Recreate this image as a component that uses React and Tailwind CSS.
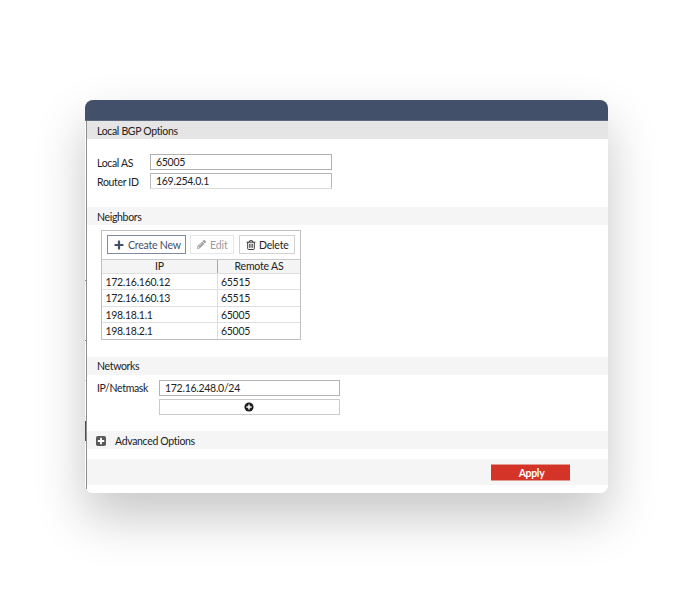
import { FaPencilAlt } from "react-icons/fa";

const neighbors = [
  ["172.16.160.12", "65515"],
  ["172.16.160.13", "65515"],
  ["198.18.1.1", "65005"],
  ["198.18.2.1", "65005"],
];

function PlusIcon() {
  return (
    <svg viewBox="0 0 10 10" className="mr-[4px] size-[10px] shrink-0" fill="currentColor">
      <path d="M3.9 1q0-.5.5-.5h1.2q.5 0 .5.5v2.9H9q.5 0 .5.5v1.2q0 .5-.5.5H6.1V9q0 .5-.5.5H4.4q-.5 0-.5-.5V6.1H1q-.5 0-.5-.5V4.4q0-.5.5-.5h2.9z" />
    </svg>
  );
}

function TrashIcon() {
  return (
    <svg viewBox="0 0 10 10" className="mr-[4px] size-[10px] shrink-0" fill="none" stroke="currentColor" strokeWidth="0.9">
      <path d="M.6 2.2h8.8M3.2 2.2l.5-1.5h2.6l.5 1.5M1.7 2.4v6.2q0 .9.8.9h5q.8 0 .8-.9V2.4" />
      <path d="M3.6 3.8v4M5 3.8v4M6.4 3.8v4" strokeWidth="0.75" />
    </svg>
  );
}

function PlusCircleIcon() {
  return (
    <svg viewBox="0 0 10 10" className="mr-px size-[10px] shrink-0">
      <circle cx="5" cy="5" r="4.6" fill="#1f1f1f" />
      <path d="M5 2.4v5.2M2.4 5h5.2" stroke="#fff" strokeWidth="1.5" />
    </svg>
  );
}

function PlusSquareIcon() {
  return (
    <svg viewBox="0 0 10 10" className="-mt-px -ml-px mr-[9px] size-[10px] shrink-0">
      <rect width="10" height="10" rx="1.8" fill="#5a5a5a" />
      <path d="M5 1.8v6.4M1.8 5h6.4" stroke="#fff" strokeWidth="1.8" />
    </svg>
  );
}

function Section({ children, className = "bg-[#f5f5f5] pt-[2px]" }) {
  return <div className={`flex h-[18px] items-center pl-[10px] ${className}`}>{children}</div>;
}

function Field({ children, className }) {
  return (
    <div className={`flex h-[16px] items-center border pl-[5px] tracking-[-0.28px] ${className}`}>{children}</div>
  );
}

export default function App() {
  return (
    <div className="h-[593px] w-[693px] overflow-hidden bg-white pt-[100px] pl-[85px] font-['Lato',sans-serif] text-[10.5px] leading-[14px] tracking-[-0.33px] text-[#222]">
      <div className="h-[393px] w-[523px] rounded-[8px] shadow-[0_24px_50px_rgba(0,0,0,0.225)]">
        <div className="flex h-[393px] flex-col overflow-hidden rounded-[8px] bg-white">
          <div className="h-[21px] shrink-0 border-b border-[#5d6a80] bg-[#425069]" />
          <div className="flex h-[372px]">
            <div className="flex w-px flex-col">
              <div className="mt-[159px] h-px bg-[#999]" />
              <div className="mt-[59px] h-px bg-[#888]" />
              <div className="mt-[39px] h-px bg-[#ccc]" />
              <div className="mt-[40px] h-[20px] bg-[#425069]" />
            </div>
            <div className="mb-[4px] w-px bg-[#8d8d8d]" />
            <div className="flex flex-1 flex-col">
              <Section className="bg-[#e5e5e5] pt-[2px]">Local BGP Options</Section>

              <div className="mt-[15px] flex h-[16px] items-center pl-[10px]">
                <span className="w-[53px] pt-px">Local AS</span>
                <Field className="w-[182px] border-[#b0b0b0]">65005</Field>
              </div>
              <div className="mt-[3px] flex h-[16px] items-center pl-[10px]">
                <span className="w-[53px] pt-px">Router ID</span>
                <Field className="w-[182px] border-[#b8b8b8] border-b-[#dcdcdc]">169.254.0.1</Field>
              </div>

              <div className="h-[18px]" />
              <Section>Neighbors</Section>
              <div className="mt-[5px] ml-[14px] h-[110px] w-[200px] border border-[#c0c0c0]">
                <div className="flex h-[28px] pt-[4px] pl-[5px]">
                  <div className="flex h-[19px] w-[79px] items-center border border-[#7f8ba0] pl-[6px] tracking-[-0.2px] text-[#425069]">
                    <PlusIcon />
                    <span>Create New</span>
                  </div>
                  <div className="ml-[4px] flex h-[19px] w-[44px] items-center border border-[#e6e6e6] pl-[6px] tracking-[-0.1px] text-[#9c9c9c]">
                    <FaPencilAlt className="mr-[4px] size-[9px] shrink-0" />
                    <span>Edit</span>
                  </div>
                  <div className="ml-[5px] flex h-[19px] w-[56px] items-center border border-[#d2d2d2] pl-[6px] tracking-[-0.2px]">
                    <TrashIcon />
                    <span className="-ml-px">Delete</span>
                  </div>
                </div>
                <div className="flex h-[15px] border-y border-t-[#c8c8c8] border-b-[#dedede] bg-[#f4f4f4] text-center leading-[13px] tracking-[-0.2px]">
                  <div className="w-[116px] border-r border-[#a8a8a8]">IP</div>
                  <div className="flex-1">Remote AS</div>
                </div>
                {neighbors.map(([ip, as], i) => (
                  <div
                    key={ip}
                    className={`flex items-center tracking-[-0.28px] ${i === 3 ? "" : "border-b border-[#e0e0e0]"} ${i === 1 ? "h-[17px]" : "h-[16px]"}`}
                  >
                    <div className="flex h-full w-[116px] items-center border-r border-[#dedede] pl-[3.4px]">{ip}</div>
                    <div className="pl-[3px]">{as}</div>
                  </div>
                ))}
              </div>

              <div className="h-[17px]" />
              <Section className="bg-[#f5f5f5]">Networks</Section>
              <div className="mt-[5px] flex h-[16px] items-center pl-[10px]">
                <span className="w-[62px]">IP/Netmask</span>
                <Field className="w-[181px] border-[#b4b4b4]">172.16.248.0/24</Field>
              </div>
              <div className="mt-[3px] ml-[72px] flex h-[16px] w-[181px] items-center justify-center border border-[#cacaca]">
                <PlusCircleIcon />
              </div>

              <div className="h-[16px]" />
              <Section>
                <PlusSquareIcon />
                <span>Advanced Options</span>
              </Section>
              <div className="mt-[10px] flex h-[26px] bg-[#f5f5f5] pt-[5px] pl-[404px]">
                <div className="flex h-[17px] w-[79px] items-center justify-center border-y border-[#e29a93] bg-[#d43327] pl-[2px] font-bold text-white">
                  Apply
                </div>
              </div>
            </div>
          </div>
        </div>
      </div>
    </div>
  );
}
